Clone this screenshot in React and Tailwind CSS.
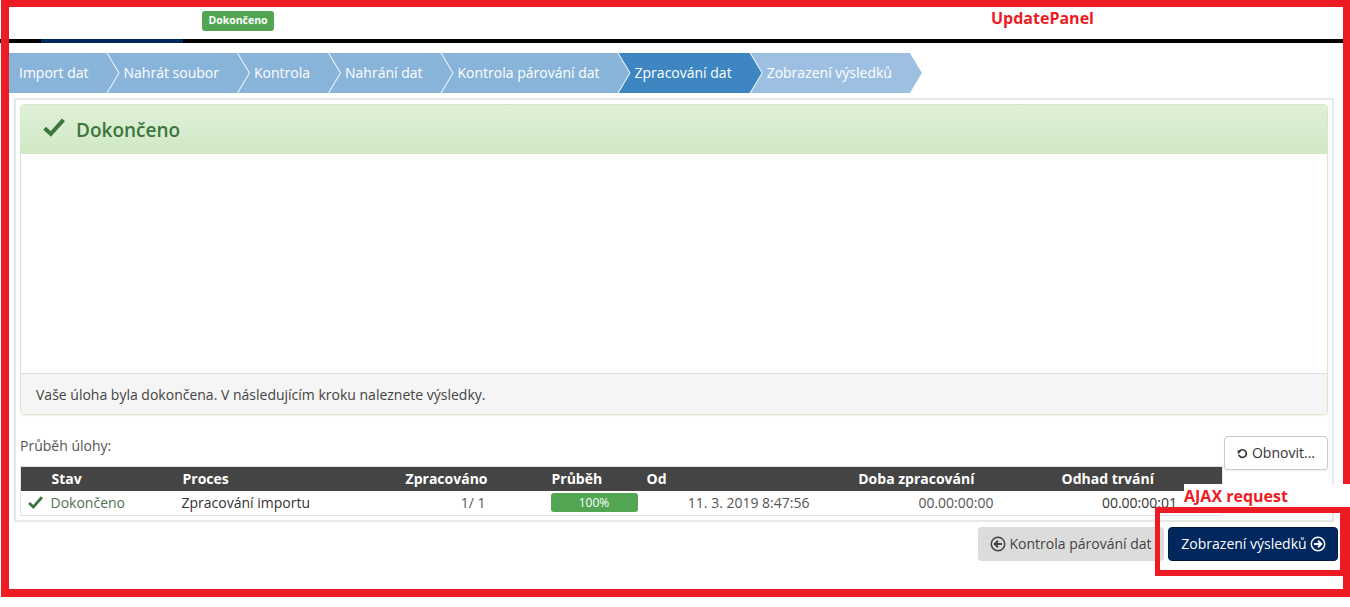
import React from 'react';

// --- SUB-COMPONENTS ---

const steps = [
    { label: 'Import dat', first: true },
    { label: 'Nahrát soubor' },
    { label: 'Kontrola' },
    { label: 'Nahrání dat' },
    { label: 'Kontrola párování dat' },
    { label: 'Zpracování dat', active: true },
    { label: 'Zobrazení výsledků', last: true },
];

const Step = ({ label, first, active, last }) => {
    const shape = first
        ? '[clip-path:polygon(0_0,calc(100%-12px)_0,100%_50%,calc(100%-12px)_100%,0_100%)] pl-2.5'
        : '[clip-path:polygon(0_0,calc(100%-12px)_0,100%_50%,calc(100%-12px)_100%,0_100%,12px_50%)] pl-4 -ml-[11px]';
    const color = active ? 'bg-[#3e86c2]' : last ? 'bg-[#9dc0e2]' : 'bg-[#89b4da]';
    return (
        <div className={`h-10 flex items-center pr-[30px] text-white text-sm whitespace-nowrap ${shape} ${color}`}>
            {label}
        </div>
    );
};

const CheckIcon = ({ className }) => (
    <svg viewBox="0 0 22 19" className={className} fill="none" stroke="currentColor" strokeWidth="4">
        <path d="M1.6 10.2 L7.8 16 L20.4 1.8" />
    </svg>
);

const CircleArrow = ({ dir, className }) => (
    <svg viewBox="0 0 16 16" className={className} fill="none" stroke="currentColor">
        <circle cx="8" cy="8" r="6.7" strokeWidth="1.5" />
        {dir === 'left' ? (
            <path d="M12 8 H5.2 M8 4.8 L4.8 8 L8 11.2" strokeWidth="2" />
        ) : (
            <path d="M4 8 H10.8 M8 4.8 L11.2 8 L8 11.2" strokeWidth="2" />
        )}
    </svg>
);

const UndoIcon = () => (
    <svg viewBox="0 0 12 12" className="w-[11px] h-[11px] text-[#333]" fill="none" stroke="currentColor" strokeWidth="1.8">
        <path d="M2.6 3.6 A4.2 4.2 0 1 1 2 7.4" />
        <path d="M0.4 2.6 H5 L1.4 6.8 Z" fill="currentColor" stroke="none" />
    </svg>
);

const TaskTable = () => (
    <table className="w-[1202px] table-fixed border border-[#e2e2e2] text-sm border-collapse">
        <colgroup>
            <col className="w-[31px]" />
            <col className="w-[131px]" />
            <col className="w-[212px]" />
            <col className="w-[157px]" />
            <col className="w-[95px]" />
            <col className="w-[174px]" />
            <col className="w-[180px]" />
            <col className="w-[222px]" />
        </colgroup>
        <thead>
            <tr className="bg-[#444444] text-white h-6 font-bold text-left">
                <th></th>
                <th className="font-bold">Stav</th>
                <th className="font-bold">Proces</th>
                <th className="font-bold text-right pr-16">Zpracováno</th>
                <th className="font-bold">Průběh</th>
                <th className="font-bold">Od</th>
                <th className="font-bold text-right pr-[26px]">Doba zpracování</th>
                <th className="font-bold text-right pr-[68px]">Odhad trvání</th>
            </tr>
        </thead>
        <tbody>
            <tr className="h-[25px] text-[#333]">
                <td className="pl-[7px]"><CheckIcon className="w-[15px] h-[13px] text-[#3c763d]" /></td>
                <td className="text-[#527252] -indent-px">Dokončeno</td>
                <td className="-indent-px">Zpracování importu</td>
                <td className="text-right pr-[66px] text-[#555]">1/ 1</td>
                <td>
                    <div className="-ml-px w-[87px] h-[19px] rounded-[3px] bg-[#52a552] text-white text-xs flex items-center justify-center">100%</div>
                </td>
                <td className="text-right pr-[11px] text-[#555]">11. 3. 2019 8:47:56</td>
                <td className="text-right pr-[7px] text-[#555]">00.00:00:00</td>
                <td className="text-right pr-[45px]">00.00:00:01</td>
            </tr>
        </tbody>
    </table>
);

// --- MAIN PAGE ---

const App = () => {
    return (
        <div className="relative w-[1350px] h-[607px] overflow-hidden bg-white font-['Open_Sans','Liberation_Sans',sans-serif]">
            {/* Top bar */}
            <div className="h-[39px] pl-[202px] pt-[11px]">
                <span className="flex w-[72px] h-5 items-center justify-center rounded-[3px] bg-[#52a552] text-white text-[10.5px] font-bold">Dokončeno</span>
            </div>
            <div className="h-1 bg-black pl-[41px]">
                <div className="h-1 w-[142px] bg-[#00275e]"></div>
            </div>

            {/* Steps */}
            <div className="flex mt-2.5 ml-[9px]">
                {steps.map(s => <Step key={s.label} {...s} />)}
            </div>

            {/* Main panel */}
            <div className="ml-3.5 mt-[5px] w-[1320px] h-[424px] border-2 border-[#e8e8e8] p-[4px]">
                <div className="h-[311px] flex flex-col rounded-[4px] border border-[#d6e9c6] shadow-[0_1px_1px_rgba(0,0,0,0.05)]">
                    <div className="h-[49px] flex items-center gap-[11px] pl-[22px] rounded-t-[3px] bg-gradient-to-b from-[#dff0d8] to-[#d0e9c6] text-[#3c763d]">
                        <CheckIcon className="w-[22px] h-[19px] -mt-1" />
                        <span className="text-[19px] font-semibold pt-0.5">Dokončeno</span>
                    </div>
                    <div className="flex-1 bg-white"></div>
                    <div className="h-[41px] flex items-center pl-[15px] pt-0.5 bg-[#f5f5f5] border-t border-[#dddddd] rounded-b-[3px] text-sm text-[#444]">
                        Vaše úloha byla dokončena. V následujícím kroku naleznete výsledky.
                    </div>
                </div>

                <div className="flex gap-0.5">
                    <div className="w-[1202px]">
                        <div className="h-[51px] pt-[21px] text-sm text-[#555]">Průběh úlohy:</div>
                        <TaskTable />
                    </div>
                    <button className="mt-[21px] w-[104px] h-[34px] flex items-center justify-center gap-1 rounded-[4px] border border-[#cccccc] bg-white text-sm text-[#333] shadow-[0_1px_1px_rgba(0,0,0,0.08)]">
                        <UndoIcon />
                        Obnovit...
                    </button>
                </div>
            </div>

            {/* Wizard buttons */}
            <div className="flex justify-end gap-1 mt-[5px] pr-3">
                <button className="w-[186px] h-[34px] flex items-center justify-center gap-[3px] rounded-[4px] bg-[#dcdcdc] text-sm text-[#444]">
                    <CircleArrow dir="left" className="w-4 h-4" />
                    Kontrola párování dat
                </button>
                <button className="w-[170px] h-[34px] flex items-center justify-center gap-[3px] pl-px rounded-[4px] border border-[#001a40] bg-[#00275e] text-sm text-white">
                    Zobrazení výsledků
                    <CircleArrow dir="right" className="w-4 h-4" />
                </button>
            </div>

            {/* Red annotations drawn over the screenshot */}
            <div className="absolute left-px top-0 w-[1349px] h-[597px] border-solid border-[#ed1c24] border-t-[7px] border-l-[8px] border-r-[7px] border-b-[8px] pointer-events-none"></div>
            <div className="absolute left-[991px] top-[6px] text-base font-bold text-[#ed1c24]">UpdatePanel</div>
            <div className="absolute left-[1184px] top-[484px] w-[166px] h-[23px] bg-white text-base font-bold text-[#ed1c24] leading-6">AJAX request</div>
            <div className="absolute left-[1155px] top-[507px] w-[188px] h-[69px] border-solid border-[#ed1c24] border-t-[6px] border-b-[6px] border-l-[5px] border-r-[3px] pointer-events-none"></div>
        </div>
    );
};

export default App;
